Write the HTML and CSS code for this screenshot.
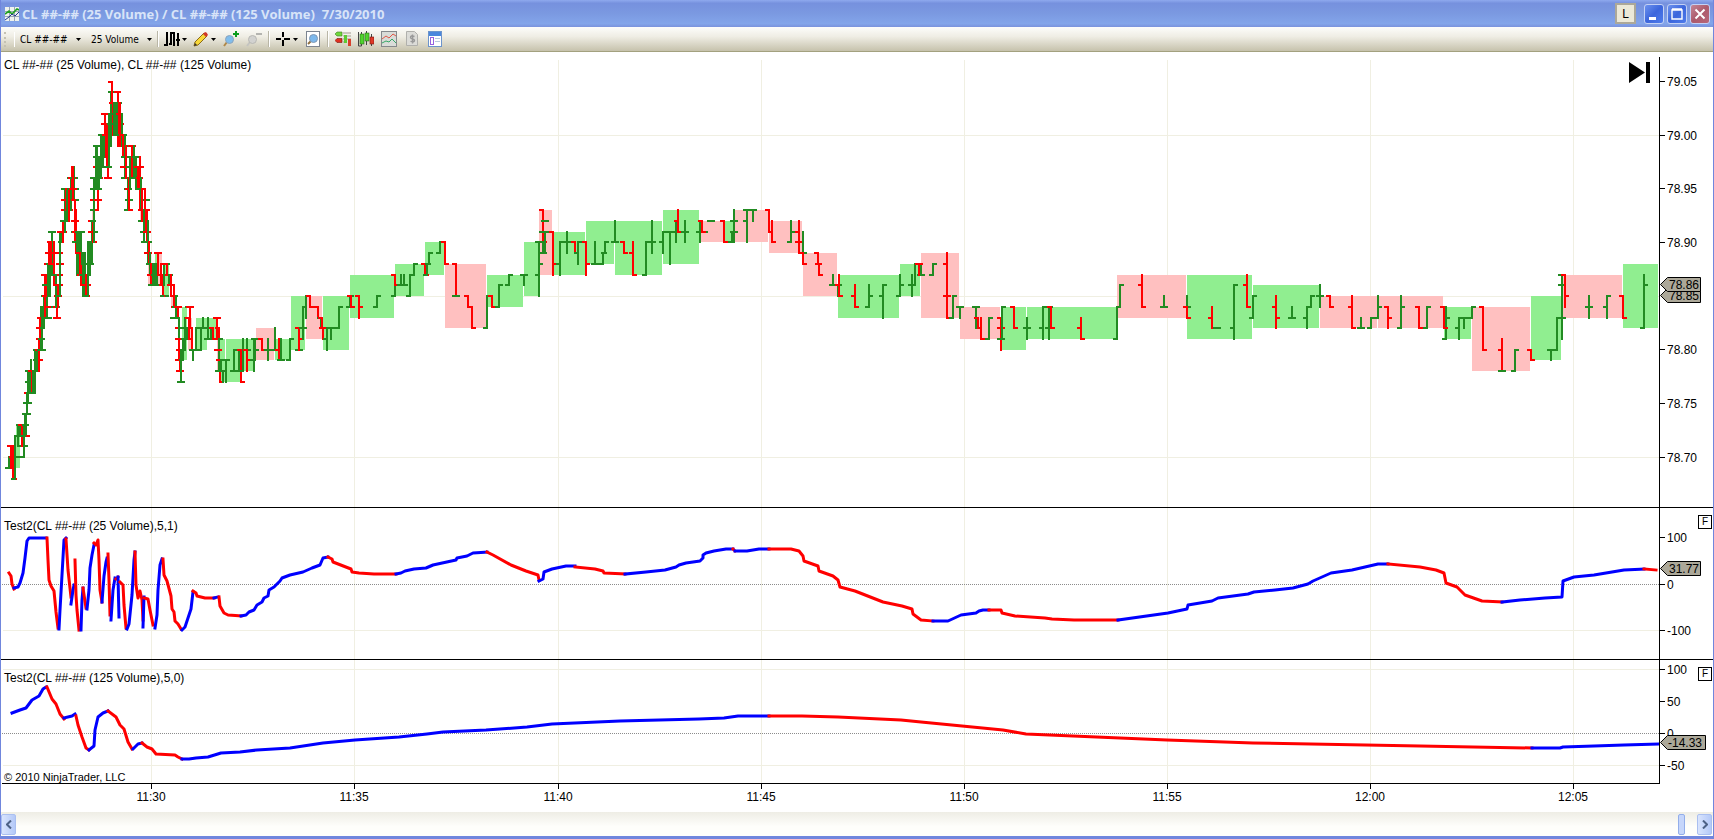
FILE: index.html
```html
<!DOCTYPE html>
<html lang="en">
  <head>
    <meta charset="utf-8">
    <title>CL ##-## (25 Volume) / CL ##-## (125 Volume) 7/30/2010</title>
    <link rel="stylesheet" href="styles.css">
  </head>
  <body>
    <header class="titlebar">
      <svg class="app-icon" width="14" height="14" viewBox="0 0 14 14">
        <rect width="14" height="14" fill="#eef2ee" />
        <path d="M0 4.5h14M0 9.5h14M4.5 0v14M9.5 0v14" stroke="#9aa6b4" fill="none" />
        <path d="M0 7l4-3 3 3 5-5 2 1" stroke="#1fa01f" stroke-width="1.6" fill="none" />
        <path d="M0 13l4-3 3-3 3 2 4-4" stroke="#23368c" fill="none" />
      </svg>
      <h1>CL ##-## (25 Volume) / CL ##-## (125 Volume)&nbsp; 7/30/2010</h1>
      <button class="link-btn">L</button>
      <button class="win-btn" aria-label="Minimize">
        <svg width="18" height="18" viewBox="0 0 18 18"><rect x="4" y="12" width="7" height="3" fill="#fff" /></svg>
      </button>
      <button class="win-btn" aria-label="Maximize">
        <svg width="18" height="18" viewBox="0 0 18 18"><path d="M4 5h10v9H4zM4 4h10" stroke="#fff" fill="none" stroke-width="1.4" /></svg>
      </button>
      <button class="win-btn close" aria-label="Close">
        <svg width="18" height="18" viewBox="0 0 18 18"><path d="M4.500 4.500l9 9M13.500 4.500l-9 9" stroke="#fff" stroke-width="2" /></svg>
      </button>
    </header>

    <nav class="toolbar">
      <span class="grip"></span>
      <label class="picker">
        <select aria-label="Instrument"><option>CL ##-##</option></select>
        <svg class="caret" width="5" height="3" viewBox="0 0 5 3"><path d="M0 0h5L2.500 3z" /></svg>
      </label>
      <label class="picker">
        <select aria-label="Interval"><option>25 Volume</option></select>
        <svg class="caret" width="5" height="3" viewBox="0 0 5 3"><path d="M0 0h5L2.500 3z" /></svg>
      </label>
      <span class="sep"></span>
      <button class="tool drop" aria-label="Chart style">
        <svg width="16" height="16" viewBox="0 0 16 16">
          <path d="M3 1v14M7 1v13M10 1v14M14 2v13M0 14h3M3 2h1M5 13h2M7 2h3M12 9h4" stroke="#000" stroke-width="2" fill="none" />
        </svg>
        <svg class="caret" width="5" height="3" viewBox="0 0 5 3"><path d="M0 0h5L2.500 3z" /></svg>
      </button>
      <button class="tool drop" aria-label="Drawing tools">
        <svg width="16" height="16" viewBox="0 0 16 16">
          <path d="M1 15l1-4 9-9 3 3-9 9z" fill="#f8d838" stroke="#8a6a18" />
          <path d="M10 3l2-2q2 0 3 3l-2 2z" fill="#d03828" />
          <path d="M1 15l1-3 2 2z" fill="#333" />
        </svg>
        <svg class="caret" width="5" height="3" viewBox="0 0 5 3"><path d="M0 0h5L2.500 3z" /></svg>
      </button>
      <button class="tool" aria-label="Zoom in">
        <svg width="16" height="16" viewBox="0 0 16 16">
          <path d="M1 15l3-4" stroke="#b08848" stroke-width="2" />
          <circle cx="6.500" cy="8.500" r="4" fill="#80bdec" stroke="#8ba4bd" />
          <path d="M13 0v6M10 3h6" stroke="#0a9c1c" stroke-width="2" />
        </svg>
      </button>
      <button class="tool" aria-label="Zoom out">
        <svg width="16" height="16" viewBox="0 0 16 16">
          <path d="M1 15l3-4" stroke="#c4c4c0" stroke-width="2" />
          <circle cx="6.500" cy="8.500" r="4" fill="#d2d2d0" stroke="#b8b8b4" />
          <path d="M10 3h6" stroke="#b4b4b0" stroke-width="2" />
        </svg>
      </button>
      <span class="sep"></span>
      <button class="tool drop" aria-label="Crosshair">
        <svg width="16" height="16" viewBox="0 0 16 16">
          <path d="M8 1v5M8 9v6M1 8h5M9 8h6" stroke="#000" stroke-width="2" />
        </svg>
        <svg class="caret" width="5" height="3" viewBox="0 0 5 3"><path d="M0 0h5L2.500 3z" /></svg>
      </button>
      <button class="tool" aria-label="Data box">
        <svg width="16" height="16" viewBox="0 0 16 16">
          <rect x="1.500" y=".5" width="13" height="15" fill="#fff" stroke="#7c8490" />
          <path d="M3 13l3-3" stroke="#907040" stroke-width="2" />
          <circle cx="8.500" cy="7.500" r="4" fill="#7cb8ec" stroke="#8098b4" />
        </svg>
      </button>
      <span class="sep"></span>
      <button class="tool" aria-label="Chart trader">
        <svg width="16" height="16" viewBox="0 0 16 16">
          <path d="M8 2h8M8 5h8M8 8h8M8 11h4" stroke="#a09a90" />
          <path d="M0 3l2-2h5v4H2z" fill="#6fd83c" stroke="#3d7a20" stroke-width=".6" />
          <path d="M0 9.500l2-2h5v4H2z" fill="#e03020" stroke="#701810" stroke-width=".6" />
          <rect x="9" y="4" width="3" height="8" fill="#5ccb33" />
          <rect x="13" y="8" width="3" height="7" fill="#d8402c" />
        </svg>
      </button>
      <button class="tool" aria-label="Bars">
        <svg width="16" height="16" viewBox="0 0 16 16">
          <path d="M.5 1v14h3M3.500 1v14M8.500 0v14M13.500 3v12" stroke="#444" fill="none" />
          <rect x="2" y="3" width="4" height="10" fill="#4fd42e" stroke="#2c6a1c" stroke-width=".6" />
          <rect x="7" y="2" width="4" height="8" fill="#4fd42e" stroke="#2c6a1c" stroke-width=".6" />
          <rect x="12" y="6" width="4" height="7" fill="#e03828" stroke="#701810" stroke-width=".6" />
        </svg>
      </button>
      <button class="tool" aria-label="Indicators">
        <svg width="16" height="16" viewBox="0 0 16 16">
          <rect x=".5" y=".5" width="15" height="15" fill="#d9dcd8" stroke="#85898c" />
          <path d="M1 8l4-3 3 2 4-4 3 2" stroke="#e05848" fill="none" />
          <path d="M1 12l4-2 3 1 3-3 4 4" stroke="#38a868" fill="none" />
        </svg>
      </button>
      <button class="tool" aria-label="Strategies">
        <svg width="16" height="16" viewBox="0 0 16 16">
          <path d="M2.500 .5h8l3 3v11h-11z" fill="#dcdcd8" stroke="#b0b0ac" />
          <path d="M10.500 5.500q-4-1.500-4 1 0 1 2 1.500t2 1.500q0 2-4 .8M8.500 3.500v9" stroke="#999" stroke-width="1.4" fill="none" />
        </svg>
      </button>
      <button class="tool" aria-label="Properties">
        <svg width="16" height="16" viewBox="0 0 16 16">
          <rect x="1.500" y=".5" width="13" height="15" fill="#fff" stroke="#6c94cc" />
          <rect x="2" y="1" width="12" height="4" fill="#4a86dc" />
          <rect x="3.500" y="6.500" width="3" height="7" fill="#fff" stroke="#9660e0" />
          <path d="M8 7.500h5M8 10.500h5" stroke="#b8c8e0" />
        </svg>
      </button>
    </nav>

    <main class="chart">
      <section class="panel price">
        <svg class="plot" id="pricePlot" viewBox="1 52 1658 455" preserveAspectRatio="none"></svg>
        <svg class="axis" id="priceAxis"></svg>
        <p class="caption">CL ##-## (25 Volume), CL ##-## (125 Volume)</p>
        <button class="jump" aria-label="Go to last bar">
          <svg width="22" height="21" viewBox="0 0 22 21"><path d="M0 0l16 10.500L0 21zM17 0h4v21h-4z" /></svg>
        </button>
      </section>
      <section class="panel fast">
        <svg class="plot" id="fastPlot" viewBox="1 508 1658 151" preserveAspectRatio="none"></svg>
        <svg class="axis" id="fastAxis"></svg>
        <p class="caption">Test2(CL ##-## (25 Volume),5,1)</p>
        <button class="fix">F</button>
      </section>
      <section class="panel slow">
        <svg class="plot" id="slowPlot" viewBox="1 660 1658 123" preserveAspectRatio="none"></svg>
        <svg class="axis" id="slowAxis"></svg>
        <p class="caption">Test2(CL ##-## (125 Volume),5,0)</p>
        <button class="fix">F</button>
        <p class="copyright">© 2010 NinjaTrader, LLC</p>
      </section>
      <svg class="times" id="times"></svg>
    </main>

    <footer class="scrollbar">
      <button aria-label="Scroll left"><svg width="6" height="9" viewBox="0 0 6 9"><path d="M5 .5l-4 4 4 4" /></svg></button>
      <input type="range" min="0" max="1000" value="993" aria-label="Chart position">
      <button aria-label="Scroll right"><svg width="6" height="9" viewBox="0 0 6 9"><path d="M1 .5l4 4-4 4" /></svg></button>
    </footer>

    <script src="chart.js"></script>
  </body>
</html>
```
FILE: styles.css
```css
* {
  box-sizing: border-box;
}
body {
  margin: 0;
  height: 100vh;
  display: flex;
  flex-direction: column;
  font-family: "Liberation Sans", Arial, sans-serif;
  font-size: 12px;
  background-color: #fff;
  border: solid #7086dd;
  border-width: 0 1px 3px;
}
button {
  font: inherit;
  padding: 0;
  border: 0;
  background: none;
}
h1,
p {
  margin: 0;
}
svg {
  display: block;
}

/* title bar */
.titlebar {
  height: 27px;
  flex: none;
  display: flex;
  align-items: center;
  gap: 3px;
  margin: 0 -1px;
  padding: 0 4px 0 5px;
  background: linear-gradient(#8ea9ee, #7691de 12%, #7b99e1 50%, #83a5ea 88%, #7a92dc);
}
.titlebar h1 {
  flex: 1;
  font-family: "Open Sans", sans-serif;
  font-size: 13px;
  line-height: 20px;
  white-space: nowrap;
  color: #d8e4f8;
}
.link-btn {
  width: 21px;
  height: 21px;
  margin-right: 5px;
  border: 2px solid #aca899;
  background-color: #ece9d8;
}
.win-btn {
  width: 20px;
  height: 20px;
  border: 1px solid #c3d1f5;
  border-radius: 3px;
  background: linear-gradient(135deg, #6d92ee, #3c66dc 50%, #4f7cec);
}
.close {
  background: linear-gradient(135deg, #c48796, #ac5a6c 50%, #b8687a);
}

/* toolbar */
.toolbar {
  height: 25px;
  flex: none;
  display: flex;
  align-items: center;
  padding-left: 3px;
  background: linear-gradient(#fdfdfb, #efede4 40%, #c6c2ac);
  border-bottom: 1px solid #a3a17f;
}
.grip {
  width: 11px;
  height: 15px;
  margin-right: 5px;
  border-left: 2px dotted #c4c1b2;
  border-right: 1px solid #fff;
}
.picker {
  display: flex;
  align-items: center;
  margin-right: 10px;
}
.picker select {
  appearance: none;
  width: 56px;
  padding: 0;
  border: 0;
  background: none;
  font-family: "DejaVu Sans Condensed", "DejaVu Sans", sans-serif;
  font-size: 10px;
  color: #000;
}
.picker + .picker {
  margin-right: 2px;
}
.sep {
  width: 1px;
  height: 16px;
  margin: 0 3px;
  background-color: #b9b6a6;
  box-shadow: 1px 0 #fff;
}
.tool {
  width: 23px;
  display: flex;
  align-items: center;
  justify-content: center;
}
.drop {
  width: 29px;
  gap: 2px;
}

/* chart */
.chart {
  flex: 1;
  min-height: 0;
  display: flex;
  flex-direction: column;
}
.panel {
  position: relative;
  min-height: 0;
  display: grid;
  grid-template-columns: 1fr 54px;
  border-bottom: 1px solid #000;
}
.price {
  flex: 455 1 0;
}
.fast {
  flex: 151 1 0;
}
.slow {
  flex: 123 1 0;
  border-bottom-color: transparent;
}
.plot,
.axis {
  width: 100%;
  height: 100%;
  min-height: 0;
  overflow: hidden;
}
.axis {
  overflow: visible;
}
.axis .tag {
  fill: #aca899;
  stroke: #000;
}
.caption {
  position: absolute;
  left: 3px;
  top: 6px;
  line-height: 14px;
}
.fast .caption,
.slow .caption {
  top: 11px;
}
.jump {
  position: absolute;
  right: 62px;
  top: 10px;
}
.fix {
  position: absolute;
  right: 1px;
  top: 7px;
  width: 14px;
  height: 14px;
  border: 1px solid #000;
  background-color: #fff;
  font-size: 10px;
  line-height: 12px;
}
.copyright {
  position: absolute;
  left: 3px;
  bottom: 0;
  font-size: 11px;
  line-height: 12px;
}
.times {
  width: calc(100% - 54px);
  height: 28px;
  flex: none;
  overflow: visible;
}

/* scroll bar */
.scrollbar {
  height: 24px;
  flex: none;
  display: flex;
  align-items: center;
  justify-content: space-between;
  padding-right: 1px;
  background: linear-gradient(#eeede5, #fefefb 60%);
}
.scrollbar button {
  width: 15px;
  height: 21px;
  display: flex;
  align-items: center;
  justify-content: center;
  border: 1px solid #aabff0;
  border-radius: 2px;
  background: linear-gradient(90deg, #d9e4fd, #b4c9f8);
}
.scrollbar path {
  fill: none;
  stroke: #4d6185;
  stroke-width: 2;
}
.scrollbar input {
  appearance: none;
  flex: 1;
  height: 21px;
  margin: 0;
  background: none;
}
.scrollbar input::-webkit-slider-thumb {
  appearance: none;
  width: 7px;
  height: 21px;
  border: 1px solid #93aeea;
  border-radius: 2px;
  background: #c6d6fb;
}
```
FILE: chart.js
```js
var NS = "http://www.w3.org/2000/svg";
var GREEN = "#228b22";
var RED = "#ff0000";
var BLUE = "#0000ff";
var GRID = "#f0efe2";

// 125 volume boxes: left, right, high, low (ticks below 79.05), up?
var boxes = [
  [16, 20, 32, 36, 1], [27, 29, 27, 29, 1], [92, 94, 12, 14, 0], [100, 102, 5, 8, 1],
  [110, 112, 1, 3, 1], [140, 142, 11, 13, 0], [148, 151, 17, 19, 0], [155, 158, 16, 19, 1],
  [158, 162, 16, 19, 0], [163, 169, 17, 20, 1], [171, 175, 20, 21, 0], [182, 187, 21, 26, 1],
  [188, 192, 22, 25, 0], [196, 207, 22, 25, 1], [207, 217, 22, 24, 1], [217, 219, 24, 27, 0],
  [220, 225, 24, 28, 1], [226, 241, 24, 28, 1], [241, 255, 24, 27, 1], [256, 274, 23, 26, 0],
  [275, 290, 24, 26, 1], [291, 305, 20, 25, 1], [306, 322, 20, 24, 0], [323, 349, 20, 25, 1],
  [350, 394, 18, 22, 1], [395, 424, 17, 20, 1], [425, 444, 15, 18, 1], [445, 486, 17, 23, 0],
  [487, 523, 18, 21, 1], [524, 539, 15, 20, 1], [539, 552, 12, 18, 0], [554, 585, 14, 18, 1],
  [586, 614, 13, 17, 1], [615, 662, 13, 18, 1], [663, 699, 12, 17, 1], [700, 724, 13, 15, 0],
  [725, 734, 13, 15, 1], [735, 768, 12, 15, 0], [769, 802, 13, 16, 0], [803, 837, 16, 20, 0],
  [838, 899, 18, 22, 1], [900, 920, 17, 20, 1], [921, 959, 16, 22, 0], [960, 1000, 21, 24, 0],
  [1001, 1026, 21, 25, 1], [1027, 1117, 21, 24, 1], [1117, 1186, 18, 22, 0], [1187, 1252, 18, 24, 1],
  [1253, 1319, 19, 23, 1], [1320, 1377, 20, 23, 0], [1378, 1443, 20, 23, 0], [1444, 1471, 21, 24, 1],
  [1472, 1530, 21, 27, 0], [1531, 1561, 20, 26, 1], [1562, 1622, 18, 22, 0], [1623, 1658, 17, 23, 1]
];

// 25 volume bars: x, open, high, low, close (ticks below 79.05), up?
var bars = [
  [9, 36, 35, 36, 35, 1], [11, 34, 34, 36, 35, 0], [13, 35, 34, 37, 37, 0], [15, 37, 33, 37, 33, 1],
  [18, 33, 32, 34, 33, 1], [20, 32, 32, 33, 34, 1], [22, 32, 32, 34, 34, 0], [24, 35, 32, 35, 34, 1],
  [26, 32, 31, 33, 31, 1], [25, 33, 31, 32, 33, 0], [25, 33, 31, 33, 32, 1], [28, 29, 28, 30, 30, 0],
  [27, 30, 29, 31, 31, 1], [28, 30, 27, 30, 30, 1], [29, 27, 27, 29, 27, 1], [31, 29, 26, 29, 27, 1],
  [32, 27, 27, 29, 29, 0], [35, 29, 25, 29, 25, 1], [33, 29, 27, 29, 26, 1], [37, 26, 25, 27, 25, 1],
  [39, 25, 24, 27, 26, 0], [41, 25, 21, 25, 24, 1], [40, 23, 22, 24, 23, 0], [42, 24, 21, 25, 25, 1],
  [44, 23, 20, 23, 21, 1], [45, 18, 18, 22, 20, 0], [47, 22, 19, 22, 22, 1], [46, 20, 18, 20, 21, 0],
  [48, 19, 17, 20, 17, 1], [50, 17, 15, 20, 15, 1], [49, 16, 15, 17, 16, 0], [52, 14, 14, 18, 14, 1],
  [51, 15, 15, 17, 16, 0], [54, 17, 15, 19, 18, 0], [57, 21, 20, 22, 22, 0], [56, 18, 18, 21, 21, 1],
  [58, 19, 19, 21, 20, 0], [60, 20, 14, 20, 15, 1], [62, 15, 14, 15, 14, 1], [63, 14, 13, 15, 14, 0],
  [65, 13, 10, 14, 10, 1], [66, 11, 10, 12, 12, 0], [67, 10, 10, 13, 11, 1], [69, 10, 10, 13, 12, 0],
  [71, 10, 9, 12, 9, 1], [72, 9, 8, 10, 9, 0], [74, 9, 8, 11, 11, 1], [73, 10, 8, 11, 10, 0],
  [75, 11, 11, 15, 13, 0], [76, 14, 12, 16, 15, 0], [77, 15, 14, 18, 17, 1], [79, 14, 14, 18, 18, 1],
  [81, 15, 14, 17, 14, 1], [80, 16, 16, 18, 17, 0], [81, 18, 17, 19, 19, 0], [83, 18, 16, 20, 19, 1],
  [85, 17, 16, 20, 18, 1], [86, 19, 18, 20, 20, 0], [88, 20, 15, 20, 16, 1], [90, 17, 15, 18, 17, 1],
  [92, 15, 13, 17, 13, 1], [93, 14, 13, 15, 15, 0], [94, 13, 12, 15, 14, 1], [94, 12, 9, 13, 10, 1],
  [96, 10, 6, 10, 7, 1], [98, 11, 9, 12, 11, 0], [97, 10, 6, 10, 6, 1], [99, 9, 7, 10, 8, 1],
  [101, 8, 5, 9, 5, 1], [103, 5, 5, 8, 7, 1], [105, 3, 3, 7, 4, 0], [104, 7, 5, 7, 5, 1],
  [107, 4, 4, 8, 6, 0], [106, 5, 4, 7, 6, 0], [108, 9, 6, 9, 9, 0], [109, 8, 3, 8, 3, 1],
  [111, 4, 1, 6, 1, 1], [112, 0, 0, 2, 2, 0], [113, 2, 2, 5, 4, 0], [114, 3, 2, 5, 2, 1],
  [116, 4, 2, 5, 3, 1], [118, 1, 1, 6, 3, 0], [117, 2, 2, 5, 5, 1], [120, 3, 2, 6, 4, 0],
  [122, 5, 3, 6, 5, 1], [123, 5, 5, 7, 6, 0], [125, 7, 5, 9, 6, 1], [126, 8, 6, 9, 9, 0],
  [128, 12, 9, 12, 8, 1], [129, 10, 9, 12, 12, 0], [130, 8, 7, 10, 9, 1], [132, 6, 6, 9, 6, 0],
  [134, 9, 6, 9, 7, 1], [136, 7, 7, 10, 10, 1], [138, 8, 8, 10, 9, 0], [140, 9, 7, 12, 8, 0],
  [141, 10, 9, 12, 11, 1], [142, 12, 10, 13, 13, 0], [145, 10, 10, 14, 12, 0], [144, 14, 12, 15, 15, 1],
  [147, 14, 12, 15, 14, 0], [148, 15, 13, 17, 15, 1], [149, 16, 15, 17, 17, 0], [150, 17, 16, 18, 18, 1],
  [151, 18, 17, 19, 19, 0], [153, 19, 17, 19, 17, 1], [155, 18, 17, 19, 18, 1], [157, 17, 17, 19, 19, 1],
  [158, 16, 16, 18, 16, 0], [161, 18, 17, 19, 17, 0], [163, 19, 18, 20, 20, 0], [164, 20, 17, 19, 17, 1],
  [167, 17, 17, 18, 18, 0], [169, 20, 18, 19, 18, 1], [171, 19, 18, 20, 19, 0], [174, 20, 19, 21, 21, 0],
  [176, 21, 20, 22, 22, 1], [178, 21, 21, 22, 21, 0], [179, 22, 22, 25, 23, 1], [179, 24, 24, 26, 26, 0],
  [180, 25, 25, 27, 27, 0], [181, 28, 25, 28, 24, 1], [183, 26, 24, 26, 23, 1], [185, 23, 22, 25, 23, 1],
  [187, 24, 23, 24, 24, 1], [190, 21, 21, 23, 21, 0], [189, 22, 22, 24, 24, 0], [192, 23, 23, 25, 25, 0],
  [193, 25, 25, 26, 25, 1], [196, 25, 23, 25, 23, 1], [201, 25, 23, 25, 23, 1], [203, 23, 22, 23, 23, 1],
  [208, 24, 22, 24, 24, 1], [211, 24, 23, 24, 24, 1], [213, 23, 23, 24, 24, 0], [217, 22, 22, 24, 22, 0],
  [219, 23, 23, 24, 24, 0], [219, 27, 24, 27, 24, 1], [218, 25, 25, 25, 25, 0], [220, 26, 27, 28, 28, 0],
  [221, 27, 26, 27, 26, 1], [223, 27, 27, 28, 27, 1], [226, 27, 26, 28, 26, 1], [234, 27, 25, 27, 25, 1],
  [239, 27, 25, 27, 25, 1], [241, 25, 25, 28, 28, 0], [243, 27, 24, 27, 25, 1], [247, 25, 24, 25, 25, 1],
  [247, 25, 25, 27, 26, 0], [254, 26, 24, 27, 24, 1], [255, 24, 24, 26, 25, 1], [262, 24, 24, 25, 25, 0],
  [268, 25, 24, 26, 25, 1], [275, 25, 23, 25, 25, 1], [279, 25, 24, 26, 26, 0], [281, 26, 24, 26, 26, 1],
  [290, 26, 24, 26, 24, 1], [299, 25, 25, 25, 25, 1], [299, 23, 23, 25, 24, 0], [303, 23, 21, 24, 23, 1],
  [306, 21, 20, 22, 20, 1], [310, 20, 20, 21, 21, 0], [318, 21, 21, 22, 22, 0], [321, 22, 22, 23, 23, 1],
  [322, 22, 22, 23, 23, 0], [323, 23, 23, 24, 24, 0], [327, 24, 23, 25, 23, 1], [331, 23, 23, 24, 23, 1],
  [339, 23, 21, 23, 21, 1], [350, 21, 20, 21, 20, 1], [351, 20, 20, 21, 21, 0], [359, 20, 20, 22, 21, 0],
  [377, 21, 20, 21, 20, 1], [395, 20, 19, 20, 19, 1], [395, 18, 18, 19, 19, 0], [401, 19, 18, 19, 19, 1],
  [404, 19, 18, 19, 19, 1], [410, 20, 18, 20, 18, 1], [414, 18, 17, 18, 17, 1], [425, 17, 17, 18, 18, 0],
  [427, 18, 17, 18, 17, 1], [429, 17, 16, 17, 16, 1], [440, 16, 15, 16, 15, 1], [445, 15, 15, 17, 17, 0],
  [456, 17, 17, 20, 20, 0], [456, 20, 20, 20, 20, 1], [468, 20, 20, 21, 21, 0], [472, 21, 21, 23, 23, 0],
  [487, 23, 20, 23, 20, 1], [492, 20, 20, 21, 21, 0], [499, 21, 19, 21, 19, 1], [509, 19, 18, 19, 18, 1],
  [524, 18, 18, 19, 18, 1], [539, 18, 15, 20, 17, 1], [539, 15, 15, 15, 15, 1], [543, 12, 12, 15, 15, 0],
  [543, 14, 14, 14, 14, 1], [543, 16, 15, 16, 16, 1], [545, 14, 14, 16, 14, 1], [545, 13, 13, 13, 13, 1], [553, 14, 14, 18, 17, 0],
  [560, 17, 15, 18, 15, 1], [567, 15, 14, 16, 15, 1], [575, 15, 15, 16, 16, 0], [578, 16, 15, 17, 15, 1],
  [586, 15, 15, 18, 17, 0], [595, 17, 15, 17, 17, 1], [603, 17, 16, 17, 16, 1], [605, 16, 15, 16, 15, 1],
  [615, 15, 13, 15, 15, 1], [624, 15, 15, 16, 16, 0], [633, 16, 15, 18, 18, 0], [646, 18, 15, 18, 15, 1],
  [652, 15, 13, 16, 15, 1], [663, 15, 14, 16, 14, 1], [670, 14, 14, 17, 14, 1], [676, 14, 13, 15, 14, 1],
  [678, 13, 12, 14, 14, 0], [685, 14, 13, 15, 14, 1], [700, 14, 13, 15, 14, 1], [704, 14, 14, 14, 14, 1],
  [702, 13, 13, 14, 14, 0], [711, 13, 13, 13, 13, 1], [724, 13, 13, 15, 15, 0], [732, 15, 14, 15, 14, 1],
  [734, 13, 12, 15, 14, 1], [734, 14, 13, 14, 13, 1], [747, 13, 12, 15, 12, 1], [747, 12, 12, 12, 12, 1],
  [753, 12, 12, 13, 12, 1], [769, 12, 12, 14, 14, 0], [772, 14, 13, 15, 15, 0], [791, 15, 13, 15, 14, 1],
  [799, 14, 13, 16, 15, 0], [799, 15, 15, 16, 16, 0], [803, 16, 14, 16, 16, 1], [803, 16, 16, 17, 17, 0],
  [818, 16, 16, 17, 17, 0], [819, 17, 17, 18, 18, 0], [833, 19, 18, 19, 19, 1], [838, 19, 19, 20, 19, 1],
  [839, 19, 18, 20, 20, 0], [855, 20, 19, 21, 21, 0], [869, 21, 19, 21, 20, 1], [883, 20, 19, 22, 19, 1],
  [900, 20, 18, 20, 19, 1], [912, 19, 18, 20, 19, 1], [915, 19, 17, 19, 17, 1], [921, 18, 17, 18, 18, 1],
  [919, 17, 17, 18, 17, 0], [933, 18, 17, 18, 17, 1], [947, 17, 16, 22, 22, 0], [947, 20, 20, 20, 20, 0],
  [953, 22, 20, 22, 20, 1], [960, 21, 21, 22, 21, 1], [976, 21, 21, 23, 21, 1], [978, 22, 22, 23, 23, 0],
  [981, 23, 22, 24, 24, 0], [989, 24, 22, 24, 22, 1], [1001, 22, 22, 25, 23, 0], [1001, 23, 23, 24, 23, 0],
  [1002, 24, 21, 24, 21, 1], [1001, 24, 24, 24, 24, 1], [1014, 21, 21, 23, 23, 0], [1027, 23, 22, 24, 23, 1],
  [1043, 23, 21, 24, 21, 1], [1049, 23, 21, 24, 21, 1], [1051, 21, 21, 23, 23, 0], [1081, 23, 22, 24, 24, 0],
  [1117, 24, 21, 24, 21, 1], [1120, 21, 19, 21, 19, 1], [1142, 19, 18, 21, 21, 0], [1164, 21, 20, 21, 21, 1],
  [1187, 21, 20, 21, 21, 1], [1187, 21, 21, 22, 22, 0], [1212, 22, 21, 23, 23, 0], [1217, 23, 23, 23, 23, 1],
  [1234, 23, 19, 24, 19, 1], [1247, 19, 18, 21, 21, 0], [1253, 22, 20, 22, 20, 1], [1276, 21, 20, 23, 22, 0],
  [1292, 22, 21, 22, 22, 1], [1307, 22, 21, 23, 21, 1], [1311, 21, 20, 21, 20, 1], [1320, 20, 19, 21, 20, 1],
  [1330, 20, 20, 21, 21, 0], [1352, 21, 20, 23, 23, 0], [1361, 23, 22, 23, 23, 1], [1371, 23, 22, 23, 22, 1],
  [1378, 22, 20, 22, 21, 1], [1388, 21, 21, 23, 22, 0], [1401, 23, 20, 23, 21, 1], [1419, 21, 21, 23, 23, 0],
  [1427, 23, 21, 23, 21, 1], [1446, 24, 21, 24, 22, 1], [1444, 21, 21, 23, 23, 0], [1459, 23, 22, 24, 22, 1],
  [1464, 22, 22, 23, 22, 1], [1472, 22, 21, 22, 21, 1], [1483, 21, 21, 25, 25, 0], [1502, 25, 24, 27, 27, 0],
  [1502, 27, 27, 27, 27, 1], [1515, 27, 25, 27, 25, 1], [1531, 25, 25, 26, 26, 0], [1551, 25, 25, 26, 25, 1],
  [1557, 25, 22, 25, 22, 1], [1562, 18, 18, 24, 22, 1], [1562, 19, 19, 23, 19, 1], [1565, 18, 18, 21, 20, 0],
  [1589, 21, 20, 22, 21, 1], [1607, 21, 20, 22, 20, 1], [1623, 20, 20, 22, 22, 0], [1644, 23, 18, 23, 19, 1]
];

// one-price bars of the fast opening move: x, price, up?
var flats = [
  [71, 9, 1], [74, 9, 1], [65, 10, 1], [75, 10, 1], [65, 11, 0], [75, 11, 1], [65, 12, 0], [64, 13, 1], [75, 13, 0],
  [61, 14, 0], [75, 14, 1], [51, 15, 0], [76, 15, 1], [49, 16, 0], [59, 16, 0], [48, 17, 0], [60, 17, 0],
  [46, 18, 0], [59, 18, 0], [46, 19, 1], [59, 19, 0], [87, 19, 0], [45, 20, 1], [58, 20, 0], [86, 20, 1],
  [44, 21, 1], [49, 21, 0], [55, 21, 1], [41, 22, 0], [48, 22, 1], [57, 22, 0], [40, 23, 0], [40, 24, 0],
  [37, 25, 1], [39, 26, 0], [29, 27, 1], [29, 28, 1], [28, 29, 0], [28, 30, 0], [26, 31, 1], [25, 32, 1],
  [26, 33, 0], [23, 34, 1], [18, 35, 1], [112, 1, 1], [117, 1, 0], [113, 2, 0], [118, 2, 1], [105, 3, 0],
  [119, 3, 1], [105, 4, 0], [120, 4, 1], [102, 5, 1], [123, 5, 1], [97, 6, 1], [108, 6, 1], [124, 6, 0],
  [97, 7, 1], [106, 7, 0], [126, 7, 1], [137, 7, 1], [97, 8, 0], [108, 8, 1], [124, 8, 0], [140, 8, 1],
  [94, 9, 1], [99, 9, 0], [108, 9, 0], [125, 9, 1], [139, 9, 0], [94, 10, 1], [98, 10, 1], [128, 10, 1],
  [142, 10, 1], [94, 11, 0], [129, 11, 1], [146, 11, 1], [95, 12, 0], [129, 12, 1], [146, 12, 0], [92, 13, 0],
  [142, 13, 1], [92, 14, 0], [146, 14, 1], [92, 15, 0], [145, 15, 1], [148, 16, 0], [151, 17, 1], [166, 17, 1],
  [153, 18, 1], [168, 18, 0], [152, 19, 1], [164, 20, 1], [174, 20, 1], [174, 22, 1], [179, 23, 0], [179, 24, 0],
  [179, 26, 0], [180, 27, 0], [181, 28, 1], [175, 21, 0], [189, 21, 1]
];

// indicator lines, split where the slope changes colour
var fast = [
  [RED, "9,573 11,576 12,584 14,589"],
  [BLUE, "14,588 18,587 20,583 23,573 25,558 27,541 29,538 46,538"],
  [RED, "47,538 48,560 49,580 51,586 54,591 56,612 58,628"],
  [BLUE, "59,629 60,610 62,575 64,540 66,538"],
  [RED, "66,539 68,570 71,597"],
  [BLUE, "71,604 73,590 74,585"],
  [RED, "75,560 76,595 77,610 79,630"],
  [BLUE, "81,630 82,600 83,588"],
  [RED, "83,588 86,608"],
  [BLUE, "87,609 89,590 90,568 92,555 94,545"],
  [RED, "94,543 96,545 98,540 99,560 100,590 102,602"],
  [BLUE, "102,602 104,576 106,562 107,558"],
  [RED, "108,554 109,580 110,615"],
  [BLUE, "111,620 113,590 115,578"],
  [RED, "116,579 118,577"],
  [BLUE, "118,577 119,617"],
  [RED, "120,582 123,585 124,605 126,628"],
  [BLUE, "127,629 129,624 132,595 134,560 135,552"],
  [RED, "135,552 136,585 138,598 140,591 142,600 143,620"],
  [BLUE, "143,627 144,597"],
  [RED, "144,598 148,599 150,610 153,625"],
  [BLUE, "155,628 157,615 158,590 160,565 162,559"],
  [RED, "163,559 164,575 167,581 171,596 172,609 174,612 175,621 178,624 181,629"],
  [BLUE, "182,630 185,627 188,618 191,609 193,592"],
  [RED, "193,591 196,593 197,596 205,598 214,598"],
  [BLUE, "214,598 218,597"],
  [RED, "219,597 220,606 224,613 228,615 241,616"],
  [BLUE, "241,616 246,615 249,612 254,610 257,605 262,602 264,598 268,596 269,590 274,587 280,581 282,578 290,575 303,572 312,568 320,565 323,558 328,557"],
  [RED, "328,557 332,559 333,562 351,569 352,572 359,573 374,574 396,574"],
  [BLUE, "396,574 401,573 405,571 414,569 426,568 433,565 456,560 457,558 467,556 473,553 487,552"],
  [RED, "487,552 493,555 511,565 526,571 538,575 539,580"],
  [BLUE, "539,581 543,579 544,572 552,569 566,566 575,566"],
  [RED, "575,567 595,569 603,571 604,573 625,574"],
  [BLUE, "625,574 646,572 665,570 676,567 679,565 686,563 700,561 703,558 703,555 706,553 714,551 726,549 733,549"],
  [RED, "733,549 735,551"],
  [BLUE, "735,551 747,551 759,549 769,549"],
  [RED, "769,549 791,549 799,551 803,556 804,561 818,566 819,571 833,576 838,580 840,587 855,591 883,602 902,606 912,609 913,614 921,620 933,621"],
  [BLUE, "933,621 948,621 961,615 976,613 979,611 983,610 989,610"],
  [RED, "989,610 1001,610 1002,613 1015,616 1045,618 1052,619 1074,620 1118,620"],
  [BLUE, "1118,620 1168,613 1187,609 1188,605 1212,601 1218,598 1248,594 1254,592 1275,590 1293,588 1308,584 1313,581 1331,573 1352,570 1378,564 1388,564"],
  [RED, "1388,564 1420,567 1436,570 1444,573 1446,583 1457,587 1465,595 1482,601 1502,602"],
  [BLUE, "1502,602 1520,600 1545,598 1562,597 1563,581 1574,577 1594,575 1624,570 1644,569"],
  [RED, "1644,569 1656,570"]
];
var slow = [
  [BLUE, "12,713 20,710 26,708 32,700 39,696 43,689 46,687"],
  [RED, "47,687 52,699 56,704 60,714 64,719"],
  [BLUE, "64,718 72,716 75,714"],
  [RED, "76,716 78,725 82,737 86,748 89,750"],
  [BLUE, "89,750 94,746 95,730 98,717 103,713 108,711"],
  [RED, "108,711 116,717 120,725 124,729 128,742 132,749"],
  [BLUE, "133,749 138,744 142,743"],
  [RED, "142,743 147,747 152,749 156,754 175,755 178,757 182,759"],
  [BLUE, "182,759 189,759 196,758 208,757 221,753 240,752 257,750 290,748 323,743 355,740 399,737 427,734 443,732 486,730 527,727 552,724 620,721 699,719 724,718 738,716 769,716"],
  [RED, "769,716 802,716 838,717 880,719 901,720 921,722 1003,730 1026,734 1167,740 1253,743 1420,746 1532,748"],
  [BLUE, "1532,748 1560,748 1563,747 1594,746 1624,745 1659,744"]
];
var times = [
  [151, "11:30"], [354, "11:35"], [558, "11:40"], [761, "11:45"],
  [964, "11:50"], [1167, "11:55"], [1370, "12:00"], [1573, "12:05"]
];

function add(parent, name, attrs, text) {
  var el = document.createElementNS(NS, name);
  for (var key in attrs) {
    el.setAttribute(key, attrs[key]);
  }
  if (text) {
    el.textContent = text;
  }
  parent.appendChild(el);
  return el;
}

function rect(svg, x, y, w, h, fill) {
  add(svg, "rect", { x: x, y: y, width: w, height: h, fill: fill });
}

function tickY(k) {
  return Math.round(81.5 + k * 10.73);
}

function drawGrid(svg, top, height, rows, zero) {
  times.forEach(function (t) {
    rect(svg, t[0], top, 1, height, GRID);
  });
  rows.forEach(function (y) {
    rect(svg, 3, y, 1656, 1, GRID);
  });
  if (zero) {
    add(svg, "path", { d: "M2 " + (zero + 0.5) + "H1659", stroke: "#8c8c8c", "stroke-dasharray": "1 1" });
  }
}

function drawBars(svg) {
  boxes.forEach(function (b) {
    var y = tickY(b[2]);
    rect(svg, b[0], y, b[1] - b[0], tickY(b[3]) - y, b[4] ? "#90ee90" : "#ffc0c0");
  });
  flats.forEach(function (f) {
    rect(svg, f[0] - 4, tickY(f[1]) - 1, 8, 2, f[2] ? GREEN : RED);
  });
  bars.forEach(function (b) {
    var color = b[5] ? GREEN : RED;
    rect(svg, b[0] - 1, tickY(b[2]) - 1, 2, tickY(b[3]) - tickY(b[2]) + 2, color);
    rect(svg, b[0] - 4, tickY(b[1]) - 1, 4, 2, color);
    rect(svg, b[0], tickY(b[4]) - 1, 4, 2, color);
  });
}

function drawLines(svg, lines) {
  lines.forEach(function (l) {
    add(svg, "polyline", { points: l[1], stroke: l[0], "stroke-width": 3, "stroke-linejoin": "round", "stroke-linecap": "square", fill: "none" });
  });
}

// labels and tags are placed by share of the panel height
function drawAxis(id, top, height, start, labels, tags) {
  var svg = document.getElementById(id);
  rect(svg, 0, start, 1, height - start, "#000");
  labels.forEach(function (l) {
    var g = add(svg, "svg", { y: ((l[0] - top) / height) * 100 + "%", overflow: "visible" });
    rect(g, 0, 0, 6, 1, "#000");
    add(g, "text", { x: 8, y: 5 }, l[1]);
  });
  tags.forEach(function (t) {
    var g = add(svg, "svg", { y: ((t[0] - top) / height) * 100 + "%", overflow: "visible" });
    add(g, "path", { "class": "tag", d: "M1.500 .5L8.500 -6.500H" + t[2] + "V7.500H8.500Z" });
    add(g, "text", { x: t[1][0] == "-" ? 9 : 10, y: 5 }, t[1]);
  });
}

var price = document.getElementById("pricePlot");
drawGrid(price, 60, 447, [135, 296, 457]);
drawBars(price);
drawAxis("priceAxis", 52, 455, 5, [
  [81, "79.05"], [135, "79.00"], [188, "78.95"], [242, "78.90"],
  [349, "78.80"], [403, "78.75"], [457, "78.70"]
], [[295, "78.85", 41.5], [284, "78.86", 41.5]]);

var fastPlot = document.getElementById("fastPlot");
drawGrid(fastPlot, 508, 151, [630], 584);
drawLines(fastPlot, fast);
drawAxis("fastAxis", 508, 151, 0, [[537, "100"], [584, "0"], [630, "-100"]], [[568, "31.77", 41.5]]);

var slowPlot = document.getElementById("slowPlot");
drawGrid(slowPlot, 660, 123, [669, 765], 733);
drawLines(slowPlot, slow);
drawAxis("slowAxis", 660, 123, 0, [[669, "100"], [701, "50"], [733, "0"], [765, "-50"]], [[742, "-14.33", 46.5]]);

var timeAxis = document.getElementById("times");
rect(timeAxis, 1, -1, "100%", 1, "#000");
times.forEach(function (t) {
  var g = add(timeAxis, "svg", { x: ((t[0] - 1) / 1658) * 100 + "%", overflow: "visible" });
  rect(g, 0, 0, 1, 5, "#000");
  add(g, "text", { x: 0, y: 17, "text-anchor": "middle" }, t[1]);
});
```
